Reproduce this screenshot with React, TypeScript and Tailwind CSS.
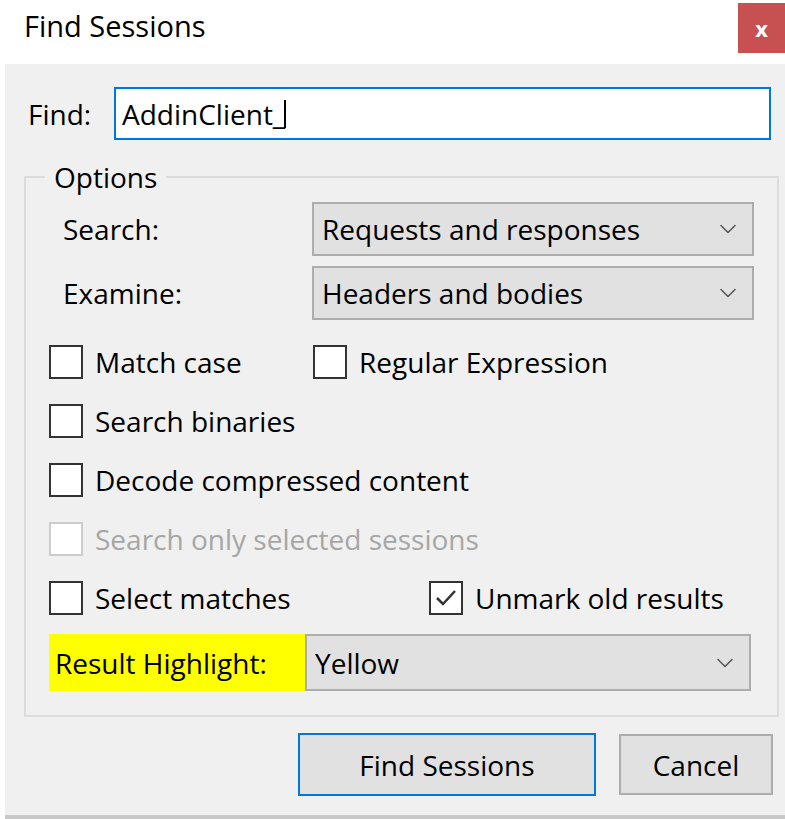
import { ChevronDown } from "lucide-react";

const FONT = "font-['Open_Sans','Noto_Sans',sans-serif]";

function Check({ label, checked = false, disabled = false }: { label: string; checked?: boolean; disabled?: boolean }) {
  return (
    <div className="flex items-center gap-[12px]">
      <div
        className={`w-[34px] h-[34px] border-2 bg-white flex items-center justify-center ${
          disabled ? "border-[#cccccc]" : "border-[#333333]"
        }`}
      >
        {checked && (
          <svg width="24" height="20" viewBox="0 0 24 20" fill="none">
            <path d="M3 10 L9 16 L21 3" stroke="#333" strokeWidth="2.5" />
          </svg>
        )}
      </div>
      <span className={`text-[28px] leading-none ${disabled ? "text-[#a6a6a6]" : "text-black"}`}>{label}</span>
    </div>
  );
}

function Combo({ value, className = "" }: { value: string; className?: string }) {
  return (
    <div
      className={`h-[54px] bg-[#e1e1e1] border-2 border-[#adadad] flex items-center justify-between pl-[8px] pr-[10px] ${className}`}
    >
      <span className="text-[28px] leading-none text-black">{value}</span>
      <ChevronDown className="w-[28px] h-[28px] text-[#555]" strokeWidth={1.3} />
    </div>
  );
}

export default function App() {
  return (
    <div className={`w-[785px] h-[819px] bg-white flex flex-col ${FONT}`}>
      {/* title bar */}
      <div className="h-[64px] flex items-start justify-between">
        <div className="pl-[24px] pt-[4px] text-[29px] text-black">Find Sessions</div>
        <div className="mt-[3px] w-[47px] h-[50px] bg-[#c75050] flex items-center justify-center text-white text-[22px] font-bold">
          x
        </div>
      </div>

      <div className="ml-[5px] flex-1 bg-[#f0f0f0] flex flex-col border-b-4 border-[#c8c8c8]">
        {/* find input */}
        <div className="flex items-center mt-[23px] pl-[23px] pr-[14px]">
          <span className="text-[28px] text-black w-[86px]">Find:</span>
          <div className="flex-1 h-[53px] bg-white border-2 border-[#0078d7] flex items-center pl-[6px]">
            <span className="text-[28px] leading-none text-black">AddinClient</span>
            <span className="text-[28px] leading-none text-black">_</span>
            <span className="w-[2px] h-[28px] bg-black -ml-[1px]" />
          </div>
        </div>

        {/* options group */}
        <fieldset className="mt-[23px] ml-[19px] mr-[10px] border-2 border-[#dcdcdc] px-[23px] pb-[24px]">
          <legend className="-ml-[4px] px-[9px] text-[28px] leading-none text-black">Options</legend>

          <div className="flex items-center mt-[11px]">
            <span className="w-[263px] pl-[14px] text-[28px] text-black">Search:</span>
            <Combo value="Requests and responses" className="w-[442px]" />
          </div>
          <div className="flex items-center mt-[10px]">
            <span className="w-[263px] pl-[14px] text-[28px] text-black">Examine:</span>
            <Combo value="Headers and bodies" className="w-[442px]" />
          </div>

          <div className="flex flex-col gap-[25px] mt-[25px]">
            <div className="flex">
              <div className="w-[264px]">
                <Check label="Match case" />
              </div>
              <Check label="Regular Expression" />
            </div>
            <Check label="Search binaries" />
            <Check label="Decode compressed content" />
            <Check label="Search only selected sessions" disabled />
            <div className="flex">
              <div className="w-[380px]">
                <Check label="Select matches" />
              </div>
              <Check label="Unmark old results" checked />
            </div>
          </div>

          <div className="flex mt-[19px] mr-[3px]">
            <div className="w-[256px] h-[57px] bg-[#ffff00] flex items-center pl-[6px] text-[28px] text-black">
              Result Highlight:
            </div>
            <Combo value="Yellow" className="flex-1 h-[57px]" />
          </div>
        </fieldset>

        {/* buttons */}
        <div className="flex justify-end gap-[23px] mt-[16px] mr-[12px]">
          <button className="w-[298px] h-[63px] bg-[#e1e1e1] border-2 border-[#0078d7] text-[28px] text-black">
            Find Sessions
          </button>
          <button className="w-[154px] h-[61px] mt-[1px] bg-[#e1e1e1] border-2 border-[#adadad] text-[28px] text-black">
            Cancel
          </button>
        </div>
      </div>
    </div>
  );
}
